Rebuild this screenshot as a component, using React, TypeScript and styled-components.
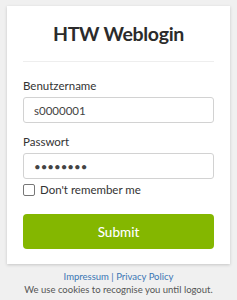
import styled, { createGlobalStyle } from "styled-components";

const GlobalStyle = createGlobalStyle`
  html, body {
    margin: 0;
    background: #f0f0f0;
    font-family: Lato, "Liberation Sans", sans-serif;
  }
`;

export default function App() {
  return (
    <>
      <GlobalStyle />
      <Page>
        <Card>
          <Title>HTW Weblogin</Title>
          <Divider />
          <Field>
            <Label>Benutzername</Label>
            <Input type="text" defaultValue="s0000001" />
          </Field>
          <Field>
            <Label>Passwort</Label>
            <Input type="password" defaultValue="password" />
          </Field>
          <Check>
            <Box type="checkbox" />
            <span>Don't remember me</span>
          </Check>
          <Submit>Submit</Submit>
        </Card>
        <Footer>
          <Links>
            <Link>Impressum</Link> | <Link>Privacy Policy</Link>
          </Links>
          <Note>We use cookies to recognise you until logout.</Note>
        </Footer>
      </Page>
    </>
  );
}

const Page = styled.div`
  width: 237px;
  padding-top: 6px;
`;

const Card = styled.div`
  margin: 0 7px;
  background: #fff;
  box-shadow: 0 1px 3px rgba(0, 0, 0, 0.18);
  padding: 14px 16px 15px;
  display: flex;
  flex-direction: column;
`;

const Title = styled.h1`
  margin: 0;
  text-align: center;
  font-size: 19.5px;
  font-weight: 700;
  color: #2b2b2b;
  line-height: 28px;
  letter-spacing: -0.3px;
`;

const Divider = styled.hr`
  border: 0;
  border-top: 1px solid #eeeeee;
  margin: 13px 0 17px;
`;

const Field = styled.div`
  display: flex;
  flex-direction: column;
  margin-bottom: 12px;

  & + & {
    margin-bottom: 4px;
  }
`;

const Label = styled.label`
  font-size: 11.5px;
  line-height: 14px;
  color: #333;
  margin-bottom: 4px;
`;

const Input = styled.input`
  box-sizing: border-box;
  height: 26px;
  border: 1px solid #d2d2d2;
  border-radius: 3px;
  padding: 0 10px;
  font-family: inherit;
  font-size: 11.5px;
  color: #444;
  outline: none;
`;

const Check = styled.label`
  display: flex;
  align-items: center;
  gap: 5px;
  font-size: 11.5px;
  line-height: 14px;
  color: #333;
`;

const Box = styled.input`
  margin: 0;
  width: 12px;
  height: 12px;
  appearance: none;
  border: 1px solid #777;
  border-radius: 2px;
  background: #fff;
`;

const Submit = styled.button`
  margin-top: 17px;
  height: 35px;
  border: 0;
  border-radius: 4px;
  background: #84b700;
  color: #fff;
  font-family: inherit;
  font-size: 13.5px;
  font-weight: 500;
`;

const Footer = styled.div`
  text-align: center;
  padding-top: 6px;
  font-size: 9.5px;
`;

const Links = styled.div`
  color: #3a76b4;
  line-height: 13px;
`;

const Link = styled.a`
  color: #3a76b4;
`;

const Note = styled.div`
  color: #555;
  line-height: 13px;
`;
